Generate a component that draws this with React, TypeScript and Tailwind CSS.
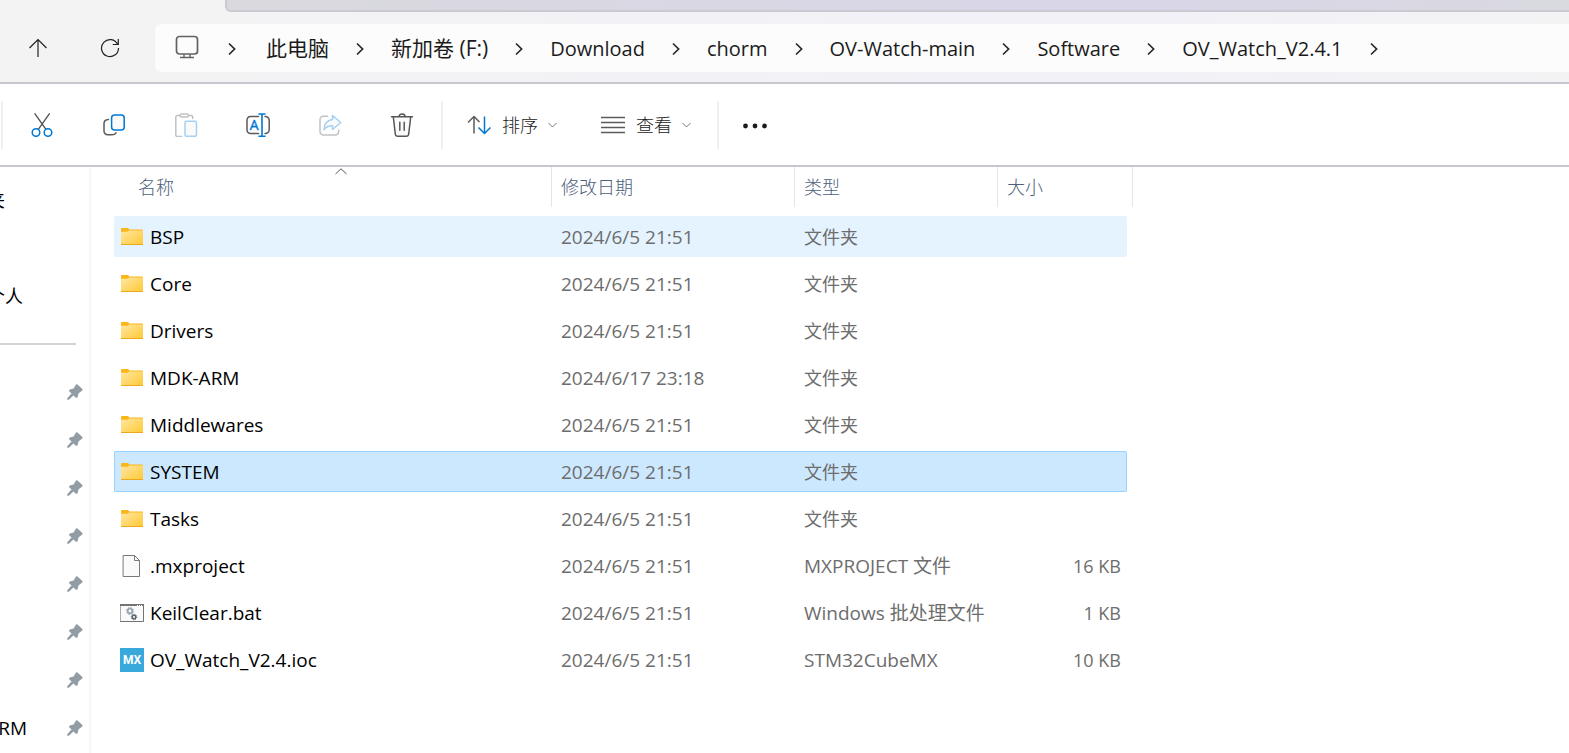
import { Fragment, useState } from "react"
import type { ReactNode } from "react"

type Kind = "folder" | "file" | "bat" | "mx"

const crumbs = [
  { name: "此电脑", cjk: true },
  { name: "新加卷 (F:)", cjk: true },
  { name: "Download" },
  { name: "chorm" },
  { name: "OV-Watch-main" },
  { name: "Software" },
  { name: "OV_Watch_V2.4.1" },
]

const files: { name: string; date: string; type: string; size: string; kind: Kind }[] = [
  { name: "BSP", date: "2024/6/5 21:51", type: "文件夹", size: "", kind: "folder" },
  { name: "Core", date: "2024/6/5 21:51", type: "文件夹", size: "", kind: "folder" },
  { name: "Drivers", date: "2024/6/5 21:51", type: "文件夹", size: "", kind: "folder" },
  { name: "MDK-ARM", date: "2024/6/17 23:18", type: "文件夹", size: "", kind: "folder" },
  { name: "Middlewares", date: "2024/6/5 21:51", type: "文件夹", size: "", kind: "folder" },
  { name: "SYSTEM", date: "2024/6/5 21:51", type: "文件夹", size: "", kind: "folder" },
  { name: "Tasks", date: "2024/6/5 21:51", type: "文件夹", size: "", kind: "folder" },
  { name: ".mxproject", date: "2024/6/5 21:51", type: "MXPROJECT 文件", size: "16 KB", kind: "file" },
  { name: "KeilClear.bat", date: "2024/6/5 21:51", type: "Windows 批处理文件", size: "1 KB", kind: "bat" },
  { name: "OV_Watch_V2.4.ioc", date: "2024/6/5 21:51", type: "STM32CubeMX", size: "10 KB", kind: "mx" },
]

function Icon({ children }: { children: ReactNode }) {
  return (
    <svg width="24" height="24" viewBox="0 0 24 24" fill="none" strokeWidth="1.5" strokeLinecap="round" strokeLinejoin="round" className="shrink-0" aria-hidden="true">
      {children}
    </svg>
  )
}

function ChevronRight() {
  return (
    <svg width="8" height="14" viewBox="0 0 8 14" fill="none" stroke="#2a2a2a" strokeWidth="1.7" className="shrink-0" aria-hidden="true">
      <path d="M1 1.5 6.6 7 1 12.5" />
    </svg>
  )
}

function ChevronDown() {
  return (
    <svg width="9" height="6" viewBox="0 0 9 6" fill="none" stroke="#777" className="shrink-0" aria-hidden="true">
      <path d="M.5 1 4.5 5l4-4" />
    </svg>
  )
}

function Pin() {
  return (
    <svg width="16" height="16" viewBox="0 0 16 16" fill="#919ca3" className="shrink-0" aria-hidden="true">
      <path d="M9 .5Q10 0 10.8.7L15.3 5Q16 6 15 6.8L11.6 9.3 10.6 13Q9.8 14.6 8.6 13.6L6.4 11.4 1.8 15.7H.2V14.2L4.6 9.6 2.3 7.4Q1.5 6.2 2.9 5.5L6.7 4.5Z" />
    </svg>
  )
}

function FileIcon({ kind }: { kind: Kind }) {
  if (kind === "folder") {
    return (
      <Icon>
        <defs>
          <linearGradient id="folder" x1="0" y1="0" x2="1" y2="1">
            <stop offset="0" stopColor="#ffe7a2" />
            <stop offset="1" stopColor="#ffc935" />
          </linearGradient>
        </defs>
        <path d="M1 4a1 1 0 0 1 1-1h6l1.5 1.5H22a1 1 0 0 1 1 1V8H1Z" fill="#f9b61b" />
        <path d="M1 6.8h6.5L9 5.5h14V20H1Z" fill="url(#folder)" />
        <path d="M1 19h22v.4a.6.6 0 0 1-.6.6H1.6a.6.6 0 0 1-.6-.6Z" fill="#eda91d" />
      </Icon>
    )
  }
  if (kind === "file") {
    return (
      <Icon>
        <path d="M3.5 1.5h11l5 5v16h-16Z" fill="#fafafa" stroke="#797979" strokeWidth="1" strokeLinejoin="miter" />
        <path d="M14.5 1.5v5h5" stroke="#797979" strokeWidth="1" />
      </Icon>
    )
  }
  if (kind === "bat") {
    return (
      <Icon>
        <rect x=".5" y="3.5" width="23" height="17" fill="#fafafa" stroke="#737373" strokeWidth="1" />
        <path d="M0 4h24" stroke="#737373" strokeWidth="2" strokeLinecap="butt" />
        <path d="M17 4.5h1m1 0h1m1 0h1" stroke="#fff" strokeWidth="1" strokeLinecap="butt" />
        <circle cx="10" cy="10" r="2.3" stroke="#9aa7b2" strokeWidth="1.8" />
        <circle cx="10" cy="10" r="3.6" stroke="#9aa7b2" strokeWidth="1" strokeDasharray="1.4 1.43" strokeLinecap="butt" />
        <circle cx="14" cy="16" r="1.8" stroke="#56646e" strokeWidth="1.4" />
        <circle cx="14" cy="16" r="2.8" stroke="#56646e" strokeWidth="1" strokeDasharray="1.1 1.1" strokeLinecap="butt" />
      </Icon>
    )
  }
  return (
    <span className="flex h-6 w-6 shrink-0 items-center justify-center bg-[#39a9dc] font-['Liberation_Sans_Narrow','Roboto',sans-serif] text-[12px] font-bold text-white">
      MX
    </span>
  )
}

const tools = [
  {
    label: "剪切",
    icon: (
      <Icon>
        <path d="M5 .8 15.8 16.2M19.3.8 8.5 16.2" stroke="#555" strokeWidth="1.4" />
        <circle cx="6" cy="19.5" r="3.8" stroke="#0078d4" />
        <circle cx="18" cy="19.5" r="3.8" stroke="#0078d4" />
      </Icon>
    ),
  },
  {
    label: "复制",
    icon: (
      <Icon>
        <path d="M6.5 6.5Q2 6.8 2 10.5V18a3.7 3.7 0 0 0 3.7 3.7H10q3.2 0 4-2" stroke="#5b5b5b" />
        <rect x="9.6" y="2" width="12.6" height="15" rx="3" stroke="#0078d4" fill="#fafafa" />
      </Icon>
    ),
  },
  {
    label: "粘贴",
    icon: (
      <Icon>
        <path d="M5.5 2.5H3.2A1.4 1.4 0 0 0 1.8 4v18a1.4 1.4 0 0 0 1.4 1.4h4.6M14.5 2.5h2.8A1.4 1.4 0 0 1 18.7 4v1.5" stroke="#c2c2c2" />
        <rect x="6" y="1" width="8.5" height="3" rx="1.5" stroke="#c2c2c2" />
        <rect x="11" y="8.3" width="11.5" height="15" rx="1.5" stroke="#a6d0f2" fill="#fafafa" />
      </Icon>
    ),
  },
  {
    label: "重命名",
    icon: (
      <Icon>
        <path d="M12.5 3.5h-8A3.5 3.5 0 0 0 1 7v10a3.5 3.5 0 0 0 3.5 3.5h8M19 3.5A3.8 3.8 0 0 1 23.2 7v10a3.8 3.8 0 0 1-4.2 3.5" stroke="#5b5b5b" />
        <path d="M13 1h6M13 23.2h6M16 1v22" stroke="#0078d4" strokeWidth="1.6" />
        <text x="8.3" y="17" textAnchor="middle" fill="#0078d4" stroke="#0078d4" strokeWidth=".4" fontSize="14" fontFamily="Open Sans, sans-serif">A</text>
      </Icon>
    ),
  },
  {
    label: "共享",
    icon: (
      <Icon>
        <path d="M9.5 3.3h-4A3.5 3.5 0 0 0 2 6.8v11.7A3.5 3.5 0 0 0 5.5 22h11.7a3.5 3.5 0 0 0 3.5-3.5V17" stroke="#c2c2c2" />
        <path d="M14.5 2.5 22.8 9.5 14.5 16.5v-3.7q-5-.5-8.500 4Q6.5 7.5 14.5 6.5Z" stroke="#a6d0f2" fill="#fafafa" />
      </Icon>
    ),
  },
  {
    label: "删除",
    icon: (
      <Icon>
        <path d="M3.2 4h17.6l-2 17a2.5 2.5 0 0 1-2.5 2.2H7.700A2.5 2.5 0 0 1 5.2 21Z" fill="#fafafa" />
        <path d="M1.5 3.7h21M3.3 4l2 17a2.5 2.5 0 0 0 2.5 2.2h8.4a2.5 2.5 0 0 0 2.5-2.2l2-17M9 3.5a3 2.5 0 0 1 6 0M9.8 9.3v8M14.2 9.3v8" stroke="#555" />
      </Icon>
    ),
  },
]

const nav = [
  { text: "夹", width: "w-[5px]" },
  null,
  { text: "个人", width: "w-[23px]" },
]

const pinned = ["", "", "", "", "", "", "", "ARM"]

export default function App() {
  const [selected, setSelected] = useState("SYSTEM")

  return (
    <div className="flex min-h-screen flex-col bg-white font-['Open_Sans','Noto_Sans_CJK_SC',sans-serif] text-black">
      <header className="border-b-2 border-[#c8c7d0] bg-linear-to-r from-[#f3f3f3] via-[#f2f1f8] via-70% to-[#f3f3f4]">
        <div className="ml-[225px] h-3 rounded-bl-md border-b-2 border-l-2 border-[#cbcad3] bg-linear-to-r from-[#d9d9de] via-[#d9d6e8] via-65% to-[#d9d9e0]" />
        <div className="flex pt-3 pb-[10px]">
          <div className="flex w-[155px] shrink-0 items-center">
            <button aria-label="向上" className="flex h-12 w-[75px] items-center justify-center">
              <svg width="20" height="20" viewBox="0 0 20 20" fill="none" stroke="#222" strokeWidth="1.2" aria-hidden="true">
                <path d="M10 19V1.5M1.500 10 10 1.5l8.500 8.500" />
              </svg>
            </button>
            <button aria-label="刷新" className="flex h-12 w-[70px] items-center justify-center">
              <svg width="20" height="20" viewBox="0 0 20 20" fill="none" stroke="#222" strokeWidth="1.2" aria-hidden="true">
                <path d="M17.700 6.500A8.500 8.500 0 1 0 18.500 10M18.300 1v5.500h-5.500" />
              </svg>
            </button>
          </div>
          <nav aria-label="地址" className="flex h-12 min-w-0 grow items-center overflow-hidden rounded-l-md bg-[#fcfcfd] pt-[2px] pl-5 text-[20px] whitespace-nowrap text-[#1b1b1b]">
            <svg width="24" height="24" viewBox="0 0 24 24" fill="none" stroke="#626262" strokeWidth="1.7" className="mb-1 shrink-0" aria-hidden="true">
              <rect x="1.5" y="1.5" width="21" height="17.5" rx="3" />
              <path d="M9 19v3.5M15 19v3.5M5 22.500h14" strokeWidth="1.4" />
            </svg>
            <span className="mr-[30px] ml-[29px]">
              <ChevronRight />
            </span>
            {crumbs.map((crumb) => (
              <Fragment key={crumb.name}>
                <button className={crumb.cjk ? "text-[21px]" : ""}>{crumb.name}</button>
                <span className="mx-[27px]">
                  <ChevronRight />
                </span>
              </Fragment>
            ))}
          </nav>
        </div>
      </header>

      <div className="flex h-[83px] shrink-0 items-center border-b-2 border-[#c8c7d0] pl-px text-[18px] text-[#1b1b1b]">
        <div className="mr-[3px] h-12 w-[2px] bg-[#efefef]" />
        {tools.map((tool) => (
          <button key={tool.label} aria-label={tool.label} className="flex h-12 w-[72px] items-center justify-center">
            {tool.icon}
          </button>
        ))}
        <div className="ml-[3px] h-12 w-[2px] bg-[#efefef]" />
        <button className="ml-6 flex h-12 items-center">
          <Icon>
            <path d="M7 20.5v-17M1 9.5l6-6L12.500 9" stroke="#5b5b5b" strokeLinecap="butt" />
            <path d="M17.5 3.5v17M11.5 14.5l6 6 6-6" stroke="#0078d4" strokeLinecap="butt" />
          </Icon>
          <span className="mr-[10px] ml-[11px] pt-[2px] font-light">排序</span>
          <ChevronDown />
        </button>
        <button className="ml-11 flex h-12 items-center">
          <Icon>
            <path d="M0 4.500h24M0 9.500h24M0 14.500h24M0 19.500h24" stroke="#5b5b5b" strokeWidth="1.3" />
          </Icon>
          <span className="mr-[10px] ml-[11px] pt-[2px] font-light">查看</span>
          <ChevronDown />
        </button>
        <div className="ml-[26px] h-12 w-[2px] bg-[#efefef]" />
        <button aria-label="更多" className="ml-6 flex h-12 items-center">
          <Icon>
            <circle cx="2.500" cy="13" r="2.4" fill="#1b1b1b" />
            <circle cx="12" cy="13" r="2.4" fill="#1b1b1b" />
            <circle cx="21.500" cy="13" r="2.4" fill="#1b1b1b" />
          </Icon>
        </button>
      </div>

      <div className="flex grow">
        <aside className="w-[91px] shrink-0 border-r-2 border-[#f7f7f7] pt-[9px] text-[18px]">
          {nav.map((item, i) => (
            <div key={i} className="flex h-12 items-center">
              {item && (
                <span className={`flex justify-end overflow-hidden whitespace-nowrap ${item.width}`}>
                  <span>{item.text}</span>
                </span>
              )}
            </div>
          ))}
          <div className="flex h-12 items-center">
            <hr className="w-[76px] border-t-2 border-[#d2d4d6]" />
          </div>
          {pinned.map((text, i) => (
            <div key={i} className="flex h-12 items-center justify-between pr-[6px]">
              <span className="flex w-[27px] justify-end overflow-hidden text-[19px]">
                <span>{text}</span>
              </span>
              <Pin />
            </div>
          ))}
        </aside>

        <main className="min-w-0 grow overflow-x-auto pl-[23px]">
          <table className="-mt-[6px] w-[1019px] table-fixed border-separate border-spacing-x-0 border-spacing-y-[6px] text-left">
            <colgroup>
              <col className="w-[438px]" />
              <col className="w-[243px]" />
              <col className="w-[203px]" />
              <col className="w-[129px]" />
              <col className="w-[6px]" />
            </colgroup>
            <thead>
              <tr className="h-[43px] align-top text-[18px] text-[#4c607a]">
                <th className="p-0 font-light" aria-sort="ascending">
                  <div className="relative flex h-10 items-center border-r border-[#e5e5e5] pl-6">
                    名称
                    <svg width="12" height="7" viewBox="0 0 12 7" fill="none" stroke="#555" className="absolute top-px left-[221px]" aria-hidden="true">
                      <path d="M.5 6 6 .8 11.5 6" />
                    </svg>
                  </div>
                </th>
                <th className="p-0 font-light">
                  <div className="flex h-10 items-center border-r border-[#e5e5e5] pl-[9px]">修改日期</div>
                </th>
                <th className="p-0 font-light">
                  <div className="flex h-10 items-center border-r border-[#e5e5e5] pl-[9px]">类型</div>
                </th>
                <th className="p-0 font-light">
                  <div className="flex h-10 items-center pl-[9px]">大小</div>
                </th>
                <td className="p-0">
                  <div className="h-10 border-r border-[#e5e5e5]" />
                </td>
              </tr>
            </thead>
            <tbody>
              {files.map((file) => {
                const active = file.name === selected
                const cell = active
                  ? "border-y border-[#99d1ff] bg-[#cce8ff]"
                  : file.name === "BSP"
                    ? "border-y border-[#e5f3ff] bg-[#e5f3ff]"
                    : "border-y border-transparent"
                return (
                  <tr key={file.name} className="h-[41px] text-[19px] leading-6 text-[#6d6d6d]" onClick={() => setSelected(file.name)}>
                    <td className={`rounded-l-xs border-l p-0 pl-[5px] text-black ${cell}`}>
                      <div className="flex items-center gap-[6px]">
                        <FileIcon kind={file.kind} />
                        {file.name}
                      </div>
                    </td>
                    <td className={`p-0 pl-[9px] ${cell}`}>{file.date}</td>
                    <td className={`p-0 pl-[9px] ${file.kind === "folder" ? "text-[18px]" : ""} ${cell}`}>{file.type}</td>
                    <td className={`rounded-r-xs border-r p-0 pr-[5px] text-right text-[18px] ${cell}`}>{file.size}</td>
                    <td className="p-0" />
                  </tr>
                )
              })}
            </tbody>
          </table>
        </main>
      </div>
    </div>
  )
}
